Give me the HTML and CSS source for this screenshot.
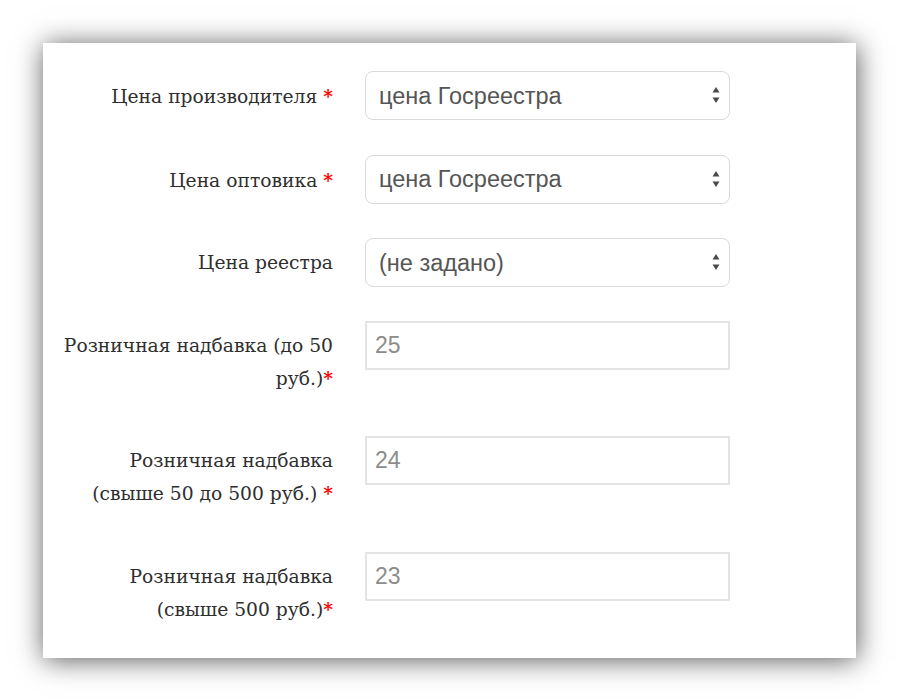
FILE: index.html
```html
<!DOCTYPE html>
<html lang="ru">
<head>
<meta charset="utf-8">
<title>Цены</title>
<link rel="stylesheet" href="styles.css">
</head>
<body>
<div class="page">
  <form class="card">
    <div class="row">
      <label class="label">Цена производителя <span class="req">*</span></label>
      <div class="control select-wrap">
        <select class="select"><option>цена Госреестра</option></select>
        <svg class="arrows" width="8" height="18" viewBox="0 0 8 18"><path d="M4 1 L7.5 6.5 L0.5 6.5 Z M4 17 L7.5 11.5 L0.5 11.5 Z" fill="#4a4a4a"/></svg>
      </div>
    </div>
    <div class="row">
      <label class="label">Цена оптовика <span class="req">*</span></label>
      <div class="control select-wrap">
        <select class="select"><option>цена Госреестра</option></select>
        <svg class="arrows" width="8" height="18" viewBox="0 0 8 18"><path d="M4 1 L7.5 6.5 L0.5 6.5 Z M4 17 L7.5 11.5 L0.5 11.5 Z" fill="#4a4a4a"/></svg>
      </div>
    </div>
    <div class="row">
      <label class="label">Цена реестра</label>
      <div class="control select-wrap">
        <select class="select"><option>(не задано)</option></select>
        <svg class="arrows" width="8" height="18" viewBox="0 0 8 18"><path d="M4 1 L7.5 6.5 L0.5 6.5 Z M4 17 L7.5 11.5 L0.5 11.5 Z" fill="#4a4a4a"/></svg>
      </div>
    </div>
    <div class="row">
      <label class="label">Розничная надбавка (до 50<br>руб.)<span class="req">*</span></label>
      <div class="control"><input class="input" type="text" value="25"></div>
    </div>
    <div class="row">
      <label class="label">Розничная надбавка<br>(свыше 50 до 500 руб.) <span class="req">*</span></label>
      <div class="control"><input class="input" type="text" value="24"></div>
    </div>
    <div class="row">
      <label class="label">Розничная надбавка<br>(свыше 500 руб.)<span class="req">*</span></label>
      <div class="control"><input class="input" type="text" value="23"></div>
    </div>
  </form>
</div>
</body>
</html>
```
FILE: styles.css
```css
html, body {
  margin: 0;
  padding: 0;
  background: #ffffff;
}

.page {
  padding: 43px 44px 42px 43px;
}

.card {
  box-sizing: border-box;
  width: 813px;
  height: 615px;
  background: #ffffff;
  box-shadow: 1px 2px 26px rgba(0, 0, 0, 0.65);
  padding: 28px 0 0 20px;
  display: flex;
  flex-direction: column;
  gap: 33.5px;
}

.row {
  display: flex;
  align-items: flex-start;
  gap: 32px;
}

.label {
  box-sizing: border-box;
  width: 270px;
  padding: 9px 0 8px 0;
  text-align: right;
  font-family: "DejaVu Serif", serif;
  font-size: 18.7px;
  line-height: 32px;
  color: #2e2e2e;
  white-space: nowrap;
}

.req {
  color: #ff0000;
  font-weight: bold;
}

.control {
  width: 365px;
}

.select-wrap {
  position: relative;
}

.select {
  -webkit-appearance: none;
  appearance: none;
  box-sizing: border-box;
  width: 365px;
  height: 49px;
  margin: 0;
  padding: 0 30px 0 13px;
  border: 1px solid #d9d9d9;
  border-radius: 8px;
  background: #ffffff;
  font-family: "Liberation Sans", Arial, sans-serif;
  font-size: 23.5px;
  color: #555555;
  outline: none;
}

.arrows {
  position: absolute;
  right: 10px;
  top: 15px;
  pointer-events: none;
}

.input {
  box-sizing: border-box;
  width: 365px;
  height: 49px;
  margin: 0;
  padding: 0 8px;
  border: 2px solid #e4e4e4;
  border-radius: 0;
  background: #ffffff;
  font-family: "Liberation Sans", Arial, sans-serif;
  font-size: 23px;
  color: #8c8c8c;
  outline: none;
}
```
